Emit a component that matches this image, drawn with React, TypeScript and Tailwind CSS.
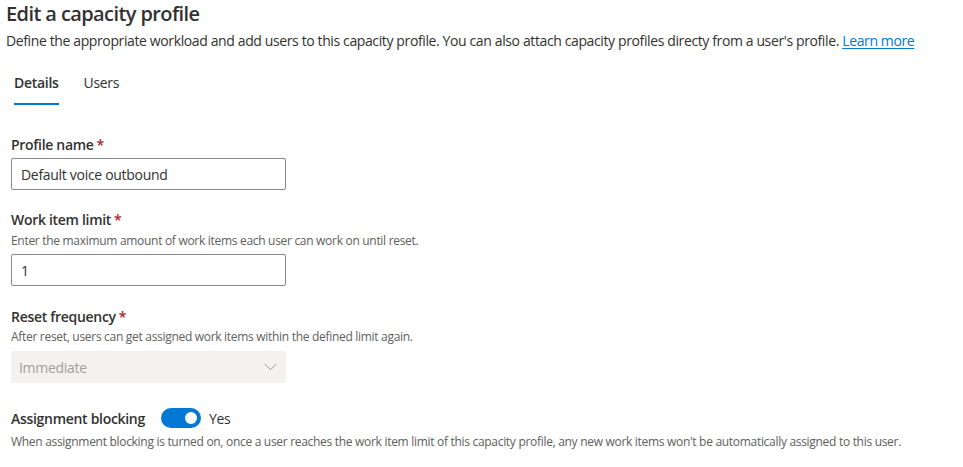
import React from "react";

const font = { fontFamily: '"Open Sans", "Noto Sans", sans-serif' };

function Req() {
  return <span className="text-[#a4262c] ml-[3px]">*</span>;
}

export default function App() {
  return (
    <div
      className="w-[963px] h-[467px] overflow-hidden bg-white text-[#323130] pl-[6px]"
      style={font}
    >
      <h1 className="text-[20px] leading-[28px] font-semibold mt-0 tracking-[-0.6px]">
        Edit a capacity profile
      </h1>
      <p className="text-[14px] leading-[20px] mt-[3px] tracking-[-0.38px]">
        Define the appropriate workload and add users to this capacity profile. You can also attach capacity profiles
        directy from a user's profile.{" "}
        <a className="text-[#0078d4] underline underline-offset-2">Learn more</a>
      </p>

      <div className="flex mt-[22px] ml-[7px] text-[14px]">
        <div className="flex flex-col items-center">
          <span className="px-[1px] leading-[20px] font-semibold tracking-[-0.3px]">Details</span>
          <div className="mt-[10px] h-[2px] w-[45px] bg-[#0078d4]" />
        </div>
        <span className="ml-[24px] leading-[20px] tracking-[-0.3px]">Users</span>
      </div>

      <div className="pl-[5px] mt-[30px]">
        <label className="block text-[14px] leading-[20px] font-semibold tracking-[-0.3px]">
          Profile name
          <Req />
        </label>
        <div className="mt-[3px] w-[275px] h-[32px] border border-[#8a8886] rounded-[2px] flex items-center pl-[9px] text-[14px] tracking-[-0.3px]">
          Default voice outbound
        </div>

        <label className="block mt-[20px] text-[14px] leading-[20px] font-semibold tracking-[-0.3px]">
          Work item limit
          <Req />
        </label>
        <p className="mt-[2px] text-[12px] leading-[18px] text-[#605e5c] tracking-[-0.3px]">
          Enter the maximum amount of work items each user can work on until reset.
        </p>
        <div className="mt-[4px] w-[275px] h-[32px] border border-[#8a8886] rounded-[2px] flex items-center pl-[9px] text-[14px]">
          1
        </div>

        <label className="block mt-[21px] text-[14px] leading-[20px] font-semibold tracking-[-0.3px]">
          Reset frequency
          <Req />
        </label>
        <p className="mt-[1px] text-[12px] leading-[18px] text-[#605e5c] tracking-[-0.3px]">
          After reset, users can get assigned work items within the defined limit again.
        </p>
        <div className="mt-[5px] w-[275px] h-[32px] bg-[#f3f2f1] rounded-[2px] flex items-center justify-between pl-[8px] pr-[8px] text-[14px] text-[#a19f9d] tracking-[-0.3px]">
          <span>Immediate</span>
          <svg width="13" height="8" viewBox="0 0 13 8" className="mr-[1px]">
            <path d="M0.5 1 L6.5 6.5 L12.5 1" fill="none" stroke="#a19f9d" strokeWidth="1" />
          </svg>
        </div>

        <div className="flex items-center mt-[25px] h-[20px]">
          <span className="text-[14px] font-semibold tracking-[-0.3px]">Assignment blocking</span>
          <div className="ml-[16px] w-[40px] h-[20px] rounded-full bg-[#0078d4] flex items-center justify-end pr-[4px]">
            <div className="w-[12px] h-[12px] rounded-full bg-white" />
          </div>
          <span className="ml-[8px] text-[14px] tracking-[-0.3px]">Yes</span>
        </div>
        <p className="mt-[6px] text-[12px] leading-[16px] text-[#605e5c] tracking-[-0.3px]">
          When assignment blocking is turned on, once a user reaches the work item limit of this capacity profile, any new
          work items won't be automatically assigned to this user.
        </p>
      </div>
    </div>
  );
}
